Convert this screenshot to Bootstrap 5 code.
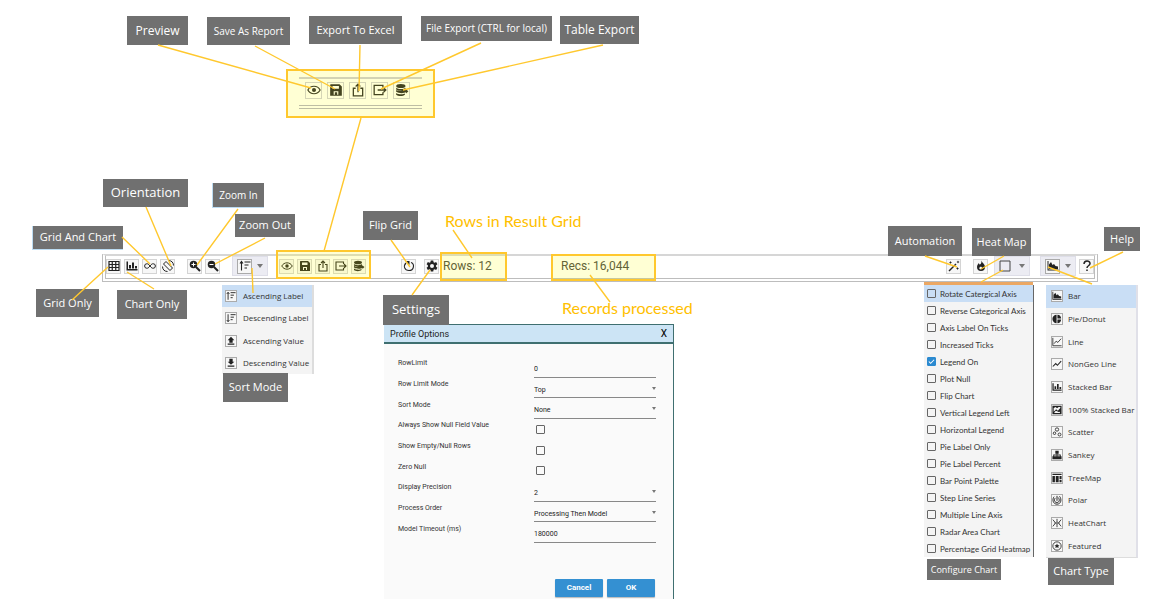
<!DOCTYPE html>
<html lang="en">
<head>
<meta charset="utf-8">
<meta name="viewport" content="width=device-width, initial-scale=1">
<title>Toolbar guide</title>
<link rel="stylesheet" href="https://cdn.jsdelivr.net/npm/bootstrap@5.3.0/dist/css/bootstrap.min.css">
<style>
body{font-family:"Open Sans","Noto Sans",sans-serif;background:#fff;color:#333;overflow-x:hidden}
.guide{min-height:599px;padding-top:254px}
svg{display:block}
.ico{width:12px;height:12px;fill:currentColor}
/* toolbar */
.toolbar{margin:0 55px 0 102px;height:28px;padding-bottom:2px;border:4px double #bdbdbd;border-top:2px solid #d6d6d6;border-bottom:4px double #bdbdbd;font:12px Roboto,sans-serif;color:#444}
.tool{width:15px;height:15px;border:1px solid #d4d4d4;background:#f7f7f7;padding:0;color:#222;display:flex;align-items:center;justify-content:center}
.tools{display:flex;gap:3px}
.drop{height:20px;background:#ececf3;border:1px solid #dedee8;padding:0 4px;width:36px;color:#444}
.drop .tool{border-color:#aaa}
.caret{border:3px solid transparent;border-top:4px solid #777;border-bottom:0}
.g2{margin-left:12px}.g3{margin-left:12px}.g4{margin-left:11px}.g5{margin-left:35px}.g6{margin-left:8px}
.rows-text{margin-left:4px;width:118px}
.fire{margin:0 6px 0 12px}
.gap-drop{margin-right:10px}
.help{margin:0 0 0 3px}
/* callouts */
.tag{position:absolute;background:#707070;color:#fff;white-space:nowrap;display:flex;align-items:center;justify-content:center}
.s13{font-size:13px}.s12{font-size:12px}.s11{font-size:11px}.s10{font-size:10px}.s9{font-size:9px}
.edge{border-left:1px solid #bcdcf2;border-bottom:1px solid #bcdcf2}
.t-preview{left:127px;top:16px;width:61px;height:29px}
.t-save{left:207px;top:17px;width:83px;height:28px}
.t-excel{left:309px;top:16px;width:93px;height:28px}
.t-file{left:421px;top:16px;width:131px;height:25px}
.t-table{left:560px;top:16px;width:79px;height:28px}
.t-orient{left:103px;top:179px;width:85px;height:28px}
.t-zin{left:212px;top:183px;width:52px;height:25px}
.t-zout{left:235px;top:214px;width:60px;height:23px}
.t-both{left:32px;top:226px;width:91px;height:24px}
.t-grid{left:36px;top:289px;width:63px;height:28px}
.t-chart{left:117px;top:290px;width:70px;height:29px}
.t-flip{left:363px;top:211px;width:55px;height:29px}
.t-set{left:383px;top:295px;width:66px;height:30px}
.t-sort{left:223px;top:373px;width:65px;height:29px}
.t-auto{right:191px;top:226px;width:74px;height:30px}
.t-heat{right:122px;top:228px;width:59px;height:28px}
.t-help{right:13px;top:227px;width:36px;height:24px}
.t-conf{right:152px;top:559px;width:74px;height:21px}
.t-type{right:39px;top:558px;width:66px;height:27px}
.note{position:absolute;color:#ffc000;font:16px/20px Lato,sans-serif;white-space:nowrap}
.n-rows{left:445px;top:211px}
.n-recs{left:562px;top:298px}
.hl{position:absolute;border:2px solid #ffc82e;background:rgba(255,255,0,.17);pointer-events:none}
.h-export{left:276px;top:250px;width:95px;height:29px}
.h-rows{left:440px;top:252px;width:67px;height:29px}
.h-recs{left:551px;top:254px;width:105px;height:27px}
.h-big{left:286px;top:69px;width:149px;height:49px;padding:6px 11px;pointer-events:auto}
.strip{height:32px;border-top:2px solid #d3d3b4;border-bottom:4px double #bdbda4;gap:5px;padding:0 0 4px 6px}
.strip .tool{width:17px;height:17px;background:transparent;border-color:#d5d5b5;color:#444420}
.strip .ico{width:14px;height:14px}
.wires{position:absolute;top:0;pointer-events:none;stroke:#ffc82e;stroke-width:1.4;fill:none}
.w-left{left:0}.w-right{right:0}
/* menus */
.menu{position:absolute;top:285px;background:#f4f4f4;font-size:8px;line-height:12px;color:#333;display:flex;flex-direction:column}
.m-sort{left:222px;width:92px;height:89px;border-right:2px solid #ddd}
.m-conf{right:119px;width:110px;height:272px;border-right:1px solid #666;font-family:Lato,sans-serif}
.m-conf::before{content:"";position:absolute;left:0;right:0;top:-3px;height:3px;background:#eba763}
.m-type{right:15px;width:92px;height:273px;border-right:2px solid #e0e0e8;border-bottom:1px solid #ddd}
.item{flex:1 1 0;min-height:0;display:flex;align-items:center;border:0;background:none;padding:0 0 0 3px;gap:6px;white-space:nowrap;overflow:hidden;color:#333;text-align:left}
.item.sel{background:#c9def5}
.item .tool{width:12px;height:12px;border-color:#aaa;flex:none}
.item .ico{width:10px;height:10px}
.m-conf .item{gap:4px}
.m-type .item{padding-left:5px;gap:5px}
.box{appearance:none;width:9px;height:9px;border:1px solid #666;border-radius:1px;background:transparent;margin:0;flex:none}
.box:checked{border-color:#2b8ad0;background:#2b8ad0 url("data:image/svg+xml,%3Csvg xmlns='http://www.w3.org/2000/svg' viewBox='0 0 8 8'%3E%3Cpath d='M1 4l2 2 4-4' fill='none' stroke='white' stroke-width='1.2'/%3E%3C/svg%3E")}
/* dialog */
.dialog{margin:42px 0 0 384px;width:290px;height:275px;background:#fafafa;border-right:1px solid #3f6f70;border-top:1px solid #3f6f70;font:7px/12px Roboto,sans-serif;color:#333}
.dialog header{height:19px;background:#cce4f5;border-bottom:2px solid #3f6f70;font-size:9px;color:#222;padding:0 6px}
.dialog header button{border:0;background:none;padding:0;font-size:10px;line-height:12px}
.form-cols{padding:9px 17px 0 14px}
.col-labels,.col-fields{display:flex;flex-direction:column;height:186px}
.col-labels>label,.fld{flex:1 1 0;min-height:0;display:flex;align-items:center}
.col-fields{margin-top:4px;width:122px}
.fld>input[type=text],.fld>select{width:100%;height:100%;border:0;border-bottom:1px solid #888;background:transparent;padding:4px 0 0;color:#222;font-size:7px;line-height:12px;outline:0;appearance:none;border-radius:0}
.fld{position:relative}
.fld .caret{position:absolute;right:0;top:9px;border-width:2px;border-top-width:3px;pointer-events:none}
.fld .box{margin-left:2px}
.act{background:#3490d2;color:#fff;border:0;border-radius:1px;width:48px;height:18px;font-size:8px;font-weight:700;line-height:12px;padding:0;box-shadow:0 1px 1px #bbb}
.actions{gap:4px;padding:36px 18px 0 0}
</style>
</head>
<body>
<svg width="0" height="0" class="position-absolute" aria-hidden="true">
<symbol id="grid" viewBox="0 0 24 24"><path d="M2 3h20v18H2zM2 9h20M2 15h20M8.500 3v18M15.500 3v18" fill="none" stroke="currentColor" stroke-width="2.400"/></symbol>
<symbol id="chart" viewBox="0 0 24 24"><path d="M1 3h3v15h19v3H1zM6 10h4v7H6zM12 5h4v12h-4zM18 12h4v5h-4z"/></symbol>
<symbol id="inf" viewBox="0 0 24 24"><path d="M12 12C9 8 7.500 7.500 5.700 7.500a4.500 4.500 0 0 0 0 9C7.500 16.500 9 16 12 12s4.500-4.500 6.300-4.500a4.500 4.500 0 0 1 0 9C16.500 16.500 15 16 12 12z" fill="none" stroke="currentColor" stroke-width="2"/></symbol>
<symbol id="rot" viewBox="0 0 24 24"><path d="M8 3l13 13-5 5L3 8zM13 1c6 0 10 4 10 10M11 23C5 23 1 19 1 13" fill="none" stroke="currentColor" stroke-width="2"/></symbol>
<symbol id="zin" viewBox="0 0 24 24"><path d="M14 14l8 8" stroke="currentColor" stroke-width="4"/><circle cx="9" cy="9" r="7.500"/><path d="M5 9h8M9 5v8" stroke="#fff" stroke-width="2"/></symbol>
<symbol id="zout" viewBox="0 0 24 24"><path d="M14 14l8 8" stroke="currentColor" stroke-width="4"/><circle cx="9" cy="9" r="7.500"/><path d="M5 9h8" stroke="#fff" stroke-width="2"/></symbol>
<symbol id="asc" viewBox="0 0 24 24"><path d="M5 21V4M2 7l3-4 3 4M11 4h12M11 10h8M11 16h5" fill="none" stroke="currentColor" stroke-width="2.200"/></symbol>
<symbol id="desc" viewBox="0 0 24 24"><path d="M5 3v17M2 17l3 4 3-4M11 4h12M11 10h8M11 16h5" fill="none" stroke="currentColor" stroke-width="2.200"/></symbol>
<symbol id="up" viewBox="0 0 24 24"><path d="M12 2l8 8h-4v6H8v-6H4zM4 18h16v3H4z"/></symbol>
<symbol id="down" viewBox="0 0 24 24"><path d="M12 16l8-7h-4V2H8v7H4zM4 18h16v3H4z"/></symbol>
<symbol id="eye" viewBox="0 0 24 24"><path d="M1.500 12C6 3.500 18 3.500 22.500 12 18 20.500 6 20.500 1.500 12z" fill="none" stroke="currentColor" stroke-width="2"/><circle cx="12" cy="12" r="3.500"/></symbol>
<symbol id="save" viewBox="0 0 24 24"><path fill-rule="evenodd" d="M3 2h15l4 4v16H2V3zM6 5v5h11V5zM8 14v6h2v-4h4v4h2v-6z"/></symbol>
<symbol id="share" viewBox="0 0 24 24"><path d="M8 9H4v13h16V9h-4M12 16V3M8 6l4-4 4 4" fill="none" stroke="currentColor" stroke-width="2.200"/></symbol>
<symbol id="exp" viewBox="0 0 24 24"><path d="M17 8V4H2v16h15v-4M8 12h13M18 8l4 4-4 4" fill="none" stroke="currentColor" stroke-width="2.200"/></symbol>
<symbol id="db" viewBox="0 0 24 24"><ellipse cx="10" cy="5" rx="8" ry="3.500"/><path d="M2 8c3 3 13 3 16 0v3h1l4 3-4 4v-2c-4 2-13 2-17-1v-3c3 2 10 2 13 1-5 1-11 0-13-2zM2 17c4 3 12 3 15 1v2c-3 3-12 3-15 0z"/></symbol>
<symbol id="flip" viewBox="0 0 24 24"><path d="M6 6c-6 6-3 15 6 15 10 0 12-13 4-16" fill="none" stroke="currentColor" stroke-width="2.200"/><path d="M5 2h8v8z"/></symbol>
<symbol id="gear" viewBox="0 0 24 24"><path fill-rule="evenodd" d="M9.500 1h5l.6 3.300 2 1.200L20.300 4l2.500 4.300-2.600 2.200v3l2.600 2.200-2.500 4.300-3.200-1.500-2 1.200-.6 3.300h-5l-.6-3.300-2-1.200L3.700 20l-2.500-4.300 2.600-2.200v-3L1.200 8.300 3.700 4l3.200 1.500 2-1.200zM12 8a4 4 0 1 0 0 8 4 4 0 0 0 0-8z"/></symbol>
<symbol id="wand" viewBox="0 0 24 24"><path d="M2 22L16 8" stroke="currentColor" stroke-width="3"/><path d="M5 2l1 2 2 1-2 1-1 2-1-2-2-1 2-1zM20 1l1 2 2 1-2 1-1 2-1-2-2-1 2-1zM19 14l1 2 2 1-2 1-1 2-1-2-2-1 2-1z"/></symbol>
<symbol id="flame" viewBox="0 0 24 24"><path fill-rule="evenodd" d="M13 1c1 5 7 7 7 13a8 8 0 0 1-16 0c0-4 2-6 4-8 0 2 1 3 2 3 3-2 3-5 3-8zM12 13c-3 1-4 3-3 5 2 2 6 0 5-3z"/></symbol>
<symbol id="area" viewBox="0 0 24 24"><path d="M1 2h2v17h20v2H1zM4 18V9l4-5 3 6 3-2 3 4 5 1v5z"/></symbol>
<symbol id="pie" viewBox="0 0 24 24"><path d="M11 2v20a10 10 0 0 1 0-20zM13 2a10 10 0 0 1 9 9h-9zM13 13h9a10 10 0 0 1-9 9z"/></symbol>
<symbol id="line" viewBox="0 0 24 24"><path d="M2 2v19h21M5 16l5-6 4 3 8-9" fill="none" stroke="currentColor" stroke-width="2"/></symbol>
<symbol id="geo" viewBox="0 0 24 24"><path d="M2 18l7-7 4 4 9-10" fill="none" stroke="currentColor" stroke-width="2.500"/></symbol>
<symbol id="full" viewBox="0 0 24 24"><path fill-rule="evenodd" d="M1 2h22v20H1zM4 7v9l6-6 4 4 6-7v-2h-4l-4 3-3-3zM5 19h14v-3l-3 1-4-2-3-1z"/></symbol>
<symbol id="scat" viewBox="0 0 24 24"><g fill="none" stroke="currentColor" stroke-width="2"><circle cx="12" cy="6" r="4"/><circle cx="6" cy="15" r="3"/><circle cx="18" cy="18" r="3.500"/></g></symbol>
<symbol id="tree" viewBox="0 0 24 24"><path d="M8 2h8v7h-3v2h8v4h2v7h-7v-7h3v-2h-6v2h3v7H8v-7h3v-2H5v2h3v7H1v-7h2v-4h8V9H8z"/></symbol>
<symbol id="tmap" viewBox="0 0 24 24"><path d="M1 2h22v3H1zM1 7h6v15H1zM9 7h7v15H9zM18 7h5v8h-5zM18 17h5v5h-5z"/></symbol>
<symbol id="polar" viewBox="0 0 24 24"><path d="M5 4C0 10 2 22 12 22S24 10 18 3M8 7c-4 5-2 11 4 11s7-7 3-12M12 2v12" fill="none" stroke="currentColor" stroke-width="2.300"/></symbol>
<symbol id="heat" viewBox="0 0 24 24"><path d="M2 4l5 6v4l-5 6M22 4l-5 6v4l5 6M12 2v5M12 17v5" fill="none" stroke="currentColor" stroke-width="2"/><circle cx="12" cy="12" r="3" fill="none" stroke="currentColor" stroke-width="2"/></symbol>
<symbol id="feat" viewBox="0 0 24 24"><circle cx="12" cy="12" r="10" fill="none" stroke="currentColor" stroke-width="2"/><path d="M12 6l2 4h4l-3 3 1 4-4-2-4 2 1-4-3-3h4z"/></symbol>
<symbol id="sq" viewBox="0 0 24 24"><path d="M2 2h20v20H2z" fill="none" stroke="currentColor" stroke-width="2"/></symbol>
<symbol id="ask" viewBox="0 0 24 24"><path d="M6 8c0-8 12-8 12-1 0 5-6 4-6 9" fill="none" stroke="currentColor" stroke-width="3"/><path d="M10.500 19h3v3h-3z"/></symbol>
</svg>
<main class="guide position-relative">
  <nav class="toolbar d-flex align-items-center" aria-label="Result toolbar">
    <div class="tools">
      <button class="tool" aria-label="Grid only"><svg class="ico"><use href="#grid"/></svg></button>
      <button class="tool" aria-label="Chart only"><svg class="ico"><use href="#chart"/></svg></button>
      <button class="tool" aria-label="Grid and chart"><svg class="ico"><use href="#inf"/></svg></button>
      <button class="tool" aria-label="Orientation"><svg class="ico"><use href="#rot"/></svg></button>
    </div>
    <div class="tools g2">
      <button class="tool" aria-label="Zoom in"><svg class="ico"><use href="#zin"/></svg></button>
      <button class="tool" aria-label="Zoom out"><svg class="ico"><use href="#zout"/></svg></button>
    </div>
    <button class="drop g3 d-flex align-items-center justify-content-between" aria-label="Sort mode"><span class="tool"><svg class="ico"><use href="#asc"/></svg></span><span class="caret"></span></button>
    <div class="tools g4">
      <button class="tool" aria-label="Preview"><svg class="ico"><use href="#eye"/></svg></button>
      <button class="tool" aria-label="Save as report"><svg class="ico"><use href="#save"/></svg></button>
      <button class="tool" aria-label="Export to Excel"><svg class="ico"><use href="#share"/></svg></button>
      <button class="tool" aria-label="File export"><svg class="ico"><use href="#exp"/></svg></button>
      <button class="tool" aria-label="Table export"><svg class="ico"><use href="#db"/></svg></button>
    </div>
    <button class="tool g5" aria-label="Flip grid"><svg class="ico"><use href="#flip"/></svg></button>
    <button class="tool g6" aria-label="Settings"><svg class="ico"><use href="#gear"/></svg></button>
    <span class="rows-text">Rows: 12</span><span>Recs: 16,044</span>
    <button class="tool ms-auto" aria-label="Automation"><svg class="ico"><use href="#wand"/></svg></button>
    <button class="tool fire" aria-label="Heat map"><svg class="ico"><use href="#flame"/></svg></button>
    <button class="drop gap-drop d-flex align-items-center justify-content-between" aria-label="Configure chart"><svg class="ico"><use href="#sq"/></svg><span class="caret"></span></button>
    <button class="drop d-flex align-items-center justify-content-between" aria-label="Chart type"><span class="tool"><svg class="ico"><use href="#area"/></svg></span><span class="caret"></span></button>
    <button class="tool help" aria-label="Help"><svg class="ico"><use href="#ask"/></svg></button>
  </nav>

  <section class="dialog d-flex flex-column" aria-label="Profile Options">
    <header class="d-flex align-items-center justify-content-between flex-shrink-0"><span>Profile Options</span><button aria-label="Close">X</button></header>
    <form class="form-cols d-flex justify-content-between">
      <div class="col-labels">
        <label for="f1">RowLimit</label><label for="f2">Row Limit Mode</label><label for="f3">Sort Mode</label>
        <label for="f4">Always Show Null Field Value</label><label for="f5">Show Empty/Null Rows</label><label for="f6">Zero Null</label>
        <label for="f7">Display Precision</label><label for="f8">Process Order</label><label for="f9">Model Timeout (ms)</label>
      </div>
      <div class="col-fields">
        <div class="fld"><input type="text" id="f1" value="0"></div>
        <div class="fld"><select id="f2"><option>Top</option></select><span class="caret"></span></div>
        <div class="fld"><select id="f3"><option>None</option></select><span class="caret"></span></div>
        <div class="fld"><input type="checkbox" class="box" id="f4"></div>
        <div class="fld"><input type="checkbox" class="box" id="f5"></div>
        <div class="fld"><input type="checkbox" class="box" id="f6"></div>
        <div class="fld"><select id="f7"><option>2</option></select><span class="caret"></span></div>
        <div class="fld"><select id="f8"><option>Processing Then Model</option></select><span class="caret"></span></div>
        <div class="fld"><input type="text" id="f9" value="180000"></div>
      </div>
    </form>
    <div class="actions d-flex justify-content-end"><button class="act">Cancel</button><button class="act">OK</button></div>
  </section>

  <div class="menu m-sort">
    <button class="item sel"><span class="tool"><svg class="ico"><use href="#asc"/></svg></span>Ascending Label</button>
    <button class="item"><span class="tool"><svg class="ico"><use href="#desc"/></svg></span>Descending Label</button>
    <button class="item"><span class="tool"><svg class="ico"><use href="#up"/></svg></span>Ascending Value</button>
    <button class="item"><span class="tool"><svg class="ico"><use href="#down"/></svg></span>Descending Value</button>
  </div>
  <div class="menu m-conf">
    <label class="item sel"><input type="checkbox" class="box">Rotate Catergical Axis</label>
    <label class="item"><input type="checkbox" class="box">Reverse Categorical Axis</label>
    <label class="item"><input type="checkbox" class="box">Axis Label On Ticks</label>
    <label class="item"><input type="checkbox" class="box">Increased Ticks</label>
    <label class="item"><input type="checkbox" class="box" checked>Legend On</label>
    <label class="item"><input type="checkbox" class="box">Plot Null</label>
    <label class="item"><input type="checkbox" class="box">Flip Chart</label>
    <label class="item"><input type="checkbox" class="box">Vertical Legend Left</label>
    <label class="item"><input type="checkbox" class="box">Horizontal Legend</label>
    <label class="item"><input type="checkbox" class="box">Pie Label Only</label>
    <label class="item"><input type="checkbox" class="box">Pie Label Percent</label>
    <label class="item"><input type="checkbox" class="box">Bar Point Palette</label>
    <label class="item"><input type="checkbox" class="box">Step Line Series</label>
    <label class="item"><input type="checkbox" class="box">Multiple Line Axis</label>
    <label class="item"><input type="checkbox" class="box">Radar Area Chart</label>
    <label class="item"><input type="checkbox" class="box">Percentage Grid Heatmap</label>
  </div>
  <div class="menu m-type">
    <button class="item sel"><span class="tool"><svg class="ico"><use href="#area"/></svg></span>Bar</button>
    <button class="item"><span class="tool"><svg class="ico"><use href="#pie"/></svg></span>Pie/Donut</button>
    <button class="item"><span class="tool"><svg class="ico"><use href="#line"/></svg></span>Line</button>
    <button class="item"><span class="tool"><svg class="ico"><use href="#geo"/></svg></span>NonGeo Line</button>
    <button class="item"><span class="tool"><svg class="ico"><use href="#chart"/></svg></span>Stacked Bar</button>
    <button class="item"><span class="tool"><svg class="ico"><use href="#full"/></svg></span>100% Stacked Bar</button>
    <button class="item"><span class="tool"><svg class="ico"><use href="#scat"/></svg></span>Scatter</button>
    <button class="item"><span class="tool"><svg class="ico"><use href="#tree"/></svg></span>Sankey</button>
    <button class="item"><span class="tool"><svg class="ico"><use href="#tmap"/></svg></span>TreeMap</button>
    <button class="item"><span class="tool"><svg class="ico"><use href="#polar"/></svg></span>Polar</button>
    <button class="item"><span class="tool"><svg class="ico"><use href="#heat"/></svg></span>HeatChart</button>
    <button class="item"><span class="tool"><svg class="ico"><use href="#feat"/></svg></span>Featured</button>
  </div>

  <div class="hl h-export"></div><div class="hl h-rows"></div><div class="hl h-recs"></div>
  <div class="hl h-big"><div class="strip d-flex align-items-center">
    <button class="tool" aria-label="Preview"><svg class="ico"><use href="#eye"/></svg></button>
    <button class="tool" aria-label="Save as report"><svg class="ico"><use href="#save"/></svg></button>
    <button class="tool" aria-label="Export to Excel"><svg class="ico"><use href="#share"/></svg></button>
    <button class="tool" aria-label="File export"><svg class="ico"><use href="#exp"/></svg></button>
    <button class="tool" aria-label="Table export"><svg class="ico"><use href="#db"/></svg></button>
  </div></div>

  <div class="tag s12 t-preview">Preview</div>
  <div class="tag s10 t-save">Save As Report</div>
  <div class="tag s11 t-excel">Export To Excel</div>
  <div class="tag s10 t-file">File Export (CTRL for local)</div>
  <div class="tag s12 t-table">Table Export</div>
  <div class="tag s13 t-orient">Orientation</div>
  <div class="tag s10 edge t-zin">Zoom In</div>
  <div class="tag s11 t-zout">Zoom Out</div>
  <div class="tag s11 edge t-both">Grid And Chart</div>
  <div class="tag s11 t-grid">Grid Only</div>
  <div class="tag s11 t-chart">Chart Only</div>
  <div class="tag s11 t-flip">Flip Grid</div>
  <div class="tag s13 t-set">Settings</div>
  <div class="tag s11 t-sort">Sort Mode</div>
  <div class="tag s11 t-auto">Automation</div>
  <div class="tag s11 t-heat">Heat Map</div>
  <div class="tag s11 t-help">Help</div>
  <div class="tag s9 t-conf">Configure Chart</div>
  <div class="tag s11 t-type">Chart Type</div>
  <div class="note n-rows">Rows in Result Grid</div>
  <div class="note n-recs">Records processed</div>

  <svg class="wires w-left" width="660" height="320" viewBox="0 0 660 320" aria-hidden="true"><path d="M158 45L311 88M255 46L335 89M360 45L359 91M481 43L381 89M603 45L403 90M361 118L324 251M146 207L171 266M238 209L197 265M265 238L215 264M122 237L150 264M108 267L72 300M154 289L127 272M252 268L253 293M391 240L410 267M430 270L412 295M453 230L472 258M590 275L610 302"/></svg>
  <svg class="wires w-right" width="283" height="320" viewBox="870 0 283 320" aria-hidden="true"><path d="M925 256L957 267M1004 256L981 269M1003 270L981 282M1123 252L1090 268M1048 267L1092 284"/></svg>
</main>
<script src="https://cdn.jsdelivr.net/npm/bootstrap@5.3.0/dist/js/bootstrap.bundle.min.js"></script>
</body>
</html>
